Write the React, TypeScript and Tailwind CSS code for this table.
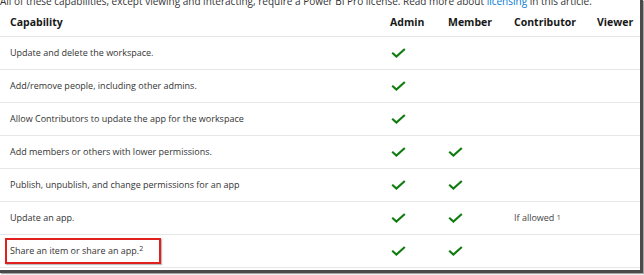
import React from 'react';

type Row = {
  label: React.ReactNode;
  admin?: boolean;
  member?: boolean;
  contributor?: React.ReactNode;
  highlight?: boolean;
};

const rows: Row[] = [
  { label: 'Update and delete the workspace.', admin: true },
  { label: 'Add/remove people, including other admins.', admin: true },
  { label: 'Allow Contributors to update the app for the workspace', admin: true },
  { label: 'Add members or others with lower permissions.', admin: true, member: true },
  { label: 'Publish, unpublish, and change permissions for an app', admin: true, member: true },
  {
    label: 'Update an app.',
    admin: true,
    member: true,
    contributor: (
      <span>
        If allowed <sup className="text-[7px] relative -top-[1px]">1</sup>
      </span>
    ),
  },
  {
    label: (
      <span>
        Share an item or share an app.<sup className="text-[7px]">2</sup>
      </span>
    ),
    admin: true,
    member: true,
    highlight: true,
  },
];

const Check: React.FC = () => (
  <svg width="15" height="10" viewBox="0 0 15 10" className="block">
    <path d="M1.2 4.8 L5.4 8.6 L13.8 1" fill="none" stroke="#107c10" strokeWidth="2.1" />
  </svg>
);

const cols = 'grid grid-cols-[380px_58px_66px_83px_53px]';

export default function App() {
  return (
    <div className="w-[644px] h-[275px] bg-white overflow-hidden font-['Open_Sans',sans-serif]">
      <div className="w-[643px] h-[273px] border-r-[3px] border-b-[3px] border-[#4a4a4a] shadow-[1px_1px_1px_rgba(0,0,0,0.35)] overflow-hidden">
        <div className="h-[9px] overflow-hidden">
          <p className="-mt-[6px] text-[10px] leading-[14px] text-[#333] whitespace-nowrap">
            All of these capabilities, except viewing and interacting, require a Power BI Pro license. Read more about{' '}
            <span className="text-[#0078d4]">licensing</span> in this article.
          </p>
        </div>

        <div className={`${cols} h-[28px] items-center border-b border-[#e6e6e6] text-[10.5px] font-bold text-[#171717]`}>
          <div className="pl-[10px]">Capability</div>
          <div className="pl-[10px]">Admin</div>
          <div className="pl-[10px]">Member</div>
          <div className="pl-[10px]">Contributor</div>
          <div className="pl-[10px]">Viewer</div>
        </div>

        {rows.map((r, i) => (
          <div
            key={i}
            className={`${cols} h-[33px] items-center border-b border-[#e6e6e6] text-[9px] text-[#333]`}
          >
            <div className="relative h-full flex items-center pl-[10px]">
              {r.label}
              {r.highlight && (
                <div className="absolute left-[5px] top-[3px] w-[156px] h-[26px] border-2 border-[#e0201e] shadow-[1px_1px_1px_rgba(0,0,0,0.25)]" />
              )}
            </div>
            <div className="pl-[11px]">{r.admin && <Check />}</div>
            <div className="pl-[10px]">{r.member && <Check />}</div>
            <div className="pl-[10px] text-[#444]">{r.contributor}</div>
            <div />
          </div>
        ))}
      </div>
    </div>
  );
}
